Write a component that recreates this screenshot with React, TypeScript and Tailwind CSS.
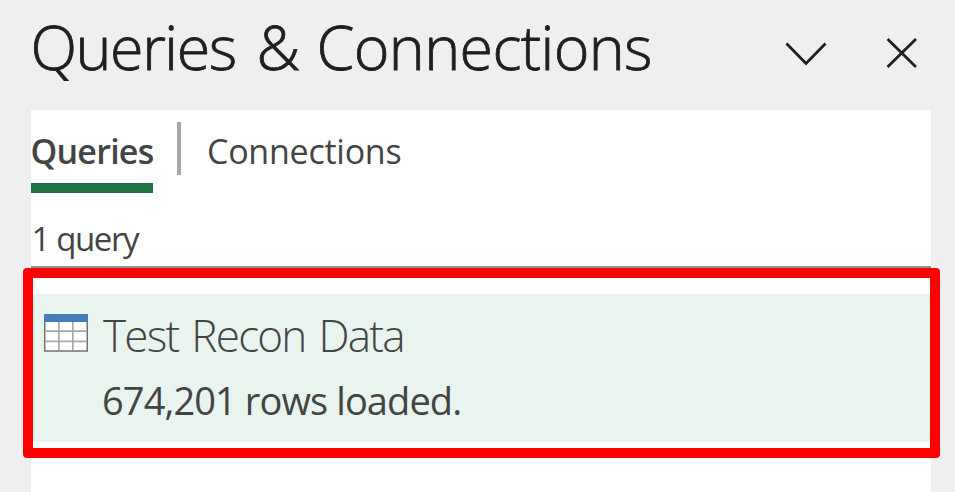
import React from "react";

function TableIcon() {
  return (
    <svg className="block h-[38px] w-[44px]" viewBox="0 0 44 38">
      <rect x="0.75" y="1" width="42.5" height="36" fill="#fff" stroke="#707070" strokeWidth="1.5" />
      <path d="M14.9 8V36.5M28.8 8V36.5M1.5 17.2H42.5M1.5 27.3H42.5" stroke="#a8a8a8" strokeWidth="1.7" fill="none" />
      <rect x="0" y="0" width="44" height="8" fill="#457db8" />
    </svg>
  );
}

export default function App() {
  return (
    <div className="relative flex h-[492px] w-[955px] flex-col overflow-hidden bg-[#efefef] pl-[30.5px] pr-[24px] font-['Open_Sans','Noto_Sans',sans-serif] text-[#444]">
      <header className="flex h-[110px] shrink-0 items-start text-[#1f1f1f]">
        <h1 className="flex-1 whitespace-nowrap text-[61px] font-light leading-[94px] [-webkit-text-stroke:0.8px_#1f1f1f]">
          <span className="inline-block w-[226px] tracking-[-1.5px]">Queries</span>
          <span className="inline-block w-[60px]">&amp;</span>
          <span className="inline-block tracking-[-0.65px]">Connections</span>
        </h1>
        <button className="mr-[59.5px] mt-[42px]" aria-label="Options">
          <svg className="block h-[25px] w-[42px]" viewBox="0 0 42 25" fill="none" stroke="currentColor" strokeWidth="2.8">
            <path d="M1.5 1.5L21 21.5L40.5 1.5" />
          </svg>
        </button>
        <button className="mr-[13px] mt-[37px]" aria-label="Close">
          <svg className="block h-[32px] w-[32px]" viewBox="0 0 32 32" fill="none" stroke="currentColor" strokeWidth="2.8">
            <path d="M1.5 2L30 30M30 2L1.5 30" />
          </svg>
        </button>
      </header>
      <main className="flex-1 bg-white">
        <nav className="flex h-[83px] items-start text-[34px] leading-[83px]">
          <div className="h-[83px] w-[122.5px] whitespace-nowrap border-b-[10px] border-[#217346] font-semibold tracking-[-0.75px]">Queries</div>
          <div className="ml-[24px] mt-[12px] h-[53px] w-[4px] bg-[#a6a6a6]" />
          <div className="ml-[26px] whitespace-nowrap tracking-[-0.25px]">Connections</div>
        </nav>
        <p className="h-[75px] border-b-2 border-[#8c9494] pl-[1px] pt-[24px] text-[33px] leading-[44px] tracking-[-1.4px]">1 query</p>
        <section className="mt-[26px] flex h-[148px] bg-[#e9f4ee] pl-[13.5px] pt-[20px]">
          <TableIcon />
          <div className="ml-[14px] whitespace-nowrap">
            <h2 className="pl-[1px] text-[44px] font-light leading-[42px] tracking-[-1.75px] [word-spacing:3.2px]">Test Recon Data</h2>
            <p className="mt-[11px] text-[38px] leading-[66px] tracking-[-0.9px]">674,201 rows loaded.</p>
          </div>
        </section>
      </main>
      <div className="absolute left-[22.5px] top-[268px] h-[190px] w-[917px] rounded-[4px] border-[10px] border-[#ff0000]" />
    </div>
  );
}
